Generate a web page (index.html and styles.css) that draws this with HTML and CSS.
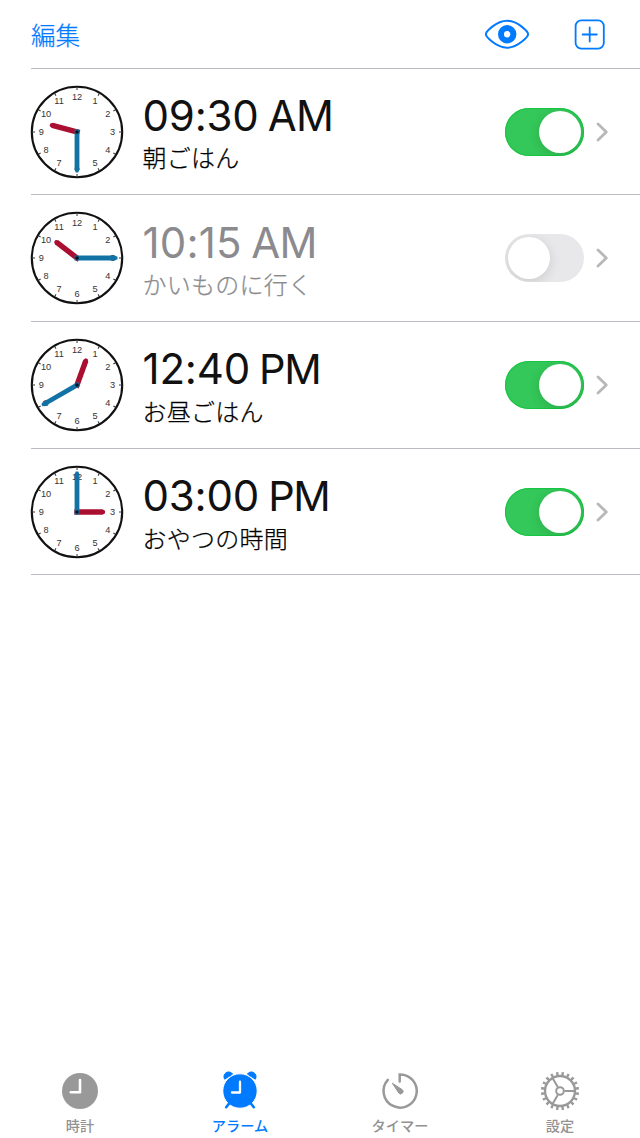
FILE: index.html
```html
<!DOCTYPE html>
<html lang="ja">
<head>
<meta charset="utf-8">
<title>アラーム</title>
<link rel="stylesheet" href="styles.css">
</head>
<body>
<div class="screen">
  <header class="toolbar">
    <span class="edit">編集</span>
    <svg class="eye" width="46" height="30" viewBox="0 0 46 30" fill="none" stroke="#007aff">
      <path d="M1.9 15.2C1.9 13 12 1.7 23 1.7S44.1 13 44.1 15.2S34 28.7 23 28.7S1.9 17.4 1.9 15.2Z" stroke-width="2" stroke-linejoin="round"/>
      <circle cx="23.2" cy="15.3" r="6.2" stroke-width="6"/>
    </svg>
    <svg class="add" width="32" height="32" viewBox="0 0 32 32" fill="none" stroke="#007aff" stroke-linecap="round">
      <rect x="1.6" y="2.4" width="28.2" height="28.2" rx="5.6" stroke-width="1.8"/><path d="M8.6 16.5H22.8M15.7 9.5V23.5" stroke-width="1.8"/>
    </svg>
  </header>
  <main class="alarms">
    <section class="alarm">
      <svg class="clock" viewBox="-47 -47 94 94" data-hour="285" data-minute="180"></svg>
      <div class="info"><div class="time">09:30 <span class="am">AM</span></div><div class="label">朝ごはん</div></div>
      <span class="switch on"><span class="knob"></span></span>
      <svg class="chevron" viewBox="0 0 14 22"><path d="M3 3L11.3 11L3 19"/></svg>
    </section>
    <section class="alarm disabled">
      <svg class="clock" viewBox="-47 -47 94 94" data-hour="307.5" data-minute="90"></svg>
      <div class="info"><div class="time">10:15 <span class="am">AM</span></div><div class="label">かいものに行く</div></div>
      <span class="switch"><span class="knob"></span></span>
      <svg class="chevron" viewBox="0 0 14 22"><path d="M3 3L11.3 11L3 19"/></svg>
    </section>
    <section class="alarm">
      <svg class="clock" viewBox="-47 -47 94 94" data-hour="20" data-minute="240"></svg>
      <div class="info"><div class="time">12:40 <span class="pm">PM</span></div><div class="label">お昼ごはん</div></div>
      <span class="switch on"><span class="knob"></span></span>
      <svg class="chevron" viewBox="0 0 14 22"><path d="M3 3L11.3 11L3 19"/></svg>
    </section>
    <section class="alarm">
      <svg class="clock" viewBox="-47 -47 94 94" data-hour="90" data-minute="0"></svg>
      <div class="info"><div class="time">03:00 <span class="pm">PM</span></div><div class="label">おやつの時間</div></div>
      <span class="switch on"><span class="knob"></span></span>
      <svg class="chevron" viewBox="0 0 14 22"><path d="M3 3L11.3 11L3 19"/></svg>
    </section>
  </main>
  <nav class="tabs">
    <div class="tab">
      <svg viewBox="-20 -20 40 40"><circle r="18" fill="#999"/><path d="M0-11V1.2H-9.2" fill="none" stroke="#fff" stroke-width="2.6" stroke-linecap="round" stroke-linejoin="round"/></svg>
      <span>時計</span>
    </div>
    <div class="tab active">
      <svg viewBox="-20 -20 40 40"><path d="M-15.3-11.8A4.6 4.6 0 0 1-7.4-16.9ZM15.3-11.8A4.6 4.6 0 0 0 7.4-16.9Z" fill="#007aff" stroke="#007aff" stroke-width="1" stroke-linejoin="round"/><circle r="17.2" fill="#007aff" stroke="#fff" stroke-width="1"/><path d="M-10.5 12L-13.8 16.2M10.5 12L13.8 16.2" stroke="#007aff" stroke-width="2.6" stroke-linecap="round"/><path d="M0-9.3V1.5H-8" fill="none" stroke="#fff" stroke-width="2.3" stroke-linecap="round" stroke-linejoin="round"/></svg>
      <span>アラーム</span>
    </div>
    <div class="tab">
      <svg viewBox="-20 -20 40 40"><path d="M-.3-9.5V-16.6A16.6 16.6 0 1 1-12.2-11.1" fill="none" stroke="#999" stroke-width="2.5" stroke-linecap="round"/><path d="M-7.7-7.8L2.6-1.1A2.5 2.5 0 0 1-.9 2.4Z" fill="#999" stroke="#999" stroke-width="1" stroke-linejoin="round"/></svg>
      <span>タイマー</span>
    </div>
    <div class="tab">
      <svg viewBox="-20 -20 40 40" fill="none" stroke="#999"><circle r="15" stroke-width="2.4"/><circle r="17.4" stroke-width="3.4" pathLength="200" stroke-dasharray="4.4 5.6" stroke-dashoffset="-2.8"/><circle r="3.8" stroke-width="2"/><path d="M4.5 0H15M-2.2 3.9L-7.5 13M-2.2-3.9L-7.5-13" stroke-width="2"/></svg>
      <span>設定</span>
    </div>
  </nav>
</div>
<script src="clocks.js"></script>
</body>
</html>
```

FILE: clocks.js
```js
// Draws each analog dial from its hour and minute hand angles.
const marks = [[12,0,-32.5],[1,18,-27.6],[2,30.7,-14.6],[3,35.6,3.4],[4,30.7,21.4],[5,18,34.2],[6,0,39.2],[7,-18,34.2],[8,-31,21.4],[9,-35.8,3.4],[10,-31,-14.6],[11,-18,-27.6]];
document.querySelectorAll(".clock").forEach(clock => {
  const {hour, minute} = clock.dataset;
  const numerals = marks.map(([n, x, y]) => `<text x="${x}" y="${y}">${n}</text>`).join("");
  const ticks = marks.map((_, i) => `<path d="M0-44.5V-42" stroke="#333" stroke-width="1" transform="rotate(${i * 30})"/>`).join("");
  clock.innerHTML = `<circle r="45.2" fill="#fff" stroke="#111" stroke-width="2.1"/>${ticks}
    <g class="numerals">${numerals}</g>
    <path transform="rotate(${hour})" d="M-2.7 2.7V-25.5L-1.2-28H1.2L2.7-25.5V2.7Z" fill="#aa0f32"/>
    <path transform="rotate(${minute})" d="M-2.4 2.4V-36L-2.8-37L-1.2-40.5H1.2L2.8-37L2.4-36V2.4Z" fill="#1272a5"/>
    <circle r="1.8" fill="#07141c"/>`;
});
```

FILE: styles.css
```css
* { box-sizing: border-box; }
body { margin: 0; background: #fff; font-family: Inter, "Noto Sans CJK JP", sans-serif; }
svg { display: block; flex: none; }
.screen { width: 640px; height: 1138px; display: flex; flex-direction: column; overflow: hidden; }
.toolbar { height: 68px; display: flex; align-items: center; padding: 0 34px 0 31px; }
.edit { color: #007aff; font: 300 24.5px/36px "Noto Sans CJK JP", sans-serif; -webkit-text-stroke: .25px; margin-right: auto; padding-top: 1px; }
.eye { margin-right: 44px; }
.alarms { margin-left: 31px; border-top: 1px solid #b9bdc2; }
.alarm { height: 127px; border-bottom: 1px solid #b9bdc2; display: flex; align-items: center; padding-right: 31px; }
.alarm:first-child { height: 126px; }
.alarm:last-child { height: 126px; padding-top: 1px; }
.clock { width: 94px; height: 94px; margin-left: -1px; }
.numerals { font-family: "Liberation Sans", sans-serif; font-size: 9.2px; text-anchor: middle; fill: #333; }
.info { flex: 1; margin-left: 18.5px; color: #111; white-space: nowrap; padding-top: 2px; }
.time { font-size: 42px; font-weight: 380; line-height: 49px; letter-spacing: -.2px; word-spacing: -2.5px; }
.pm { letter-spacing: -1.3px; font-size: 41.5px; }
.am { letter-spacing: -.8px; }
.label { font: 300 24px/34px "Noto Sans CJK JP", sans-serif; -webkit-text-stroke: .25px; letter-spacing: .25px; color: #000; }
.disabled .time, .disabled .label { color: #8b8b8f; }
.disabled .time { letter-spacing: .2px; }
.switch { width: 79px; height: 48px; border-radius: 24px; padding: 3px; background: #e8e8ea; display: flex; overflow: hidden; }
.knob { width: 42px; height: 42px; border-radius: 50%; background: #fff; box-shadow: 0 3px 12px rgba(0,0,0,.13); }
.on { background: #34c759; justify-content: flex-end; box-shadow: inset 0 0 0 1px #16c643; }
.chevron { width: 14px; height: 22px; margin-left: 11px; }
.chevron path { fill: none; stroke: #b8b8b8; stroke-width: 2.8; stroke-linecap: round; stroke-linejoin: round; }
.tabs { margin-top: auto; height: 67px; display: flex; }
.tab { width: 160px; display: flex; flex-direction: column; align-items: center; color: #929292; font: 500 14.2px/20px "Noto Sans CJK JP", sans-serif; }
.tab svg { width: 40px; height: 40px; margin-bottom: 4px; overflow: visible; }
.active { color: #007aff; }
```
